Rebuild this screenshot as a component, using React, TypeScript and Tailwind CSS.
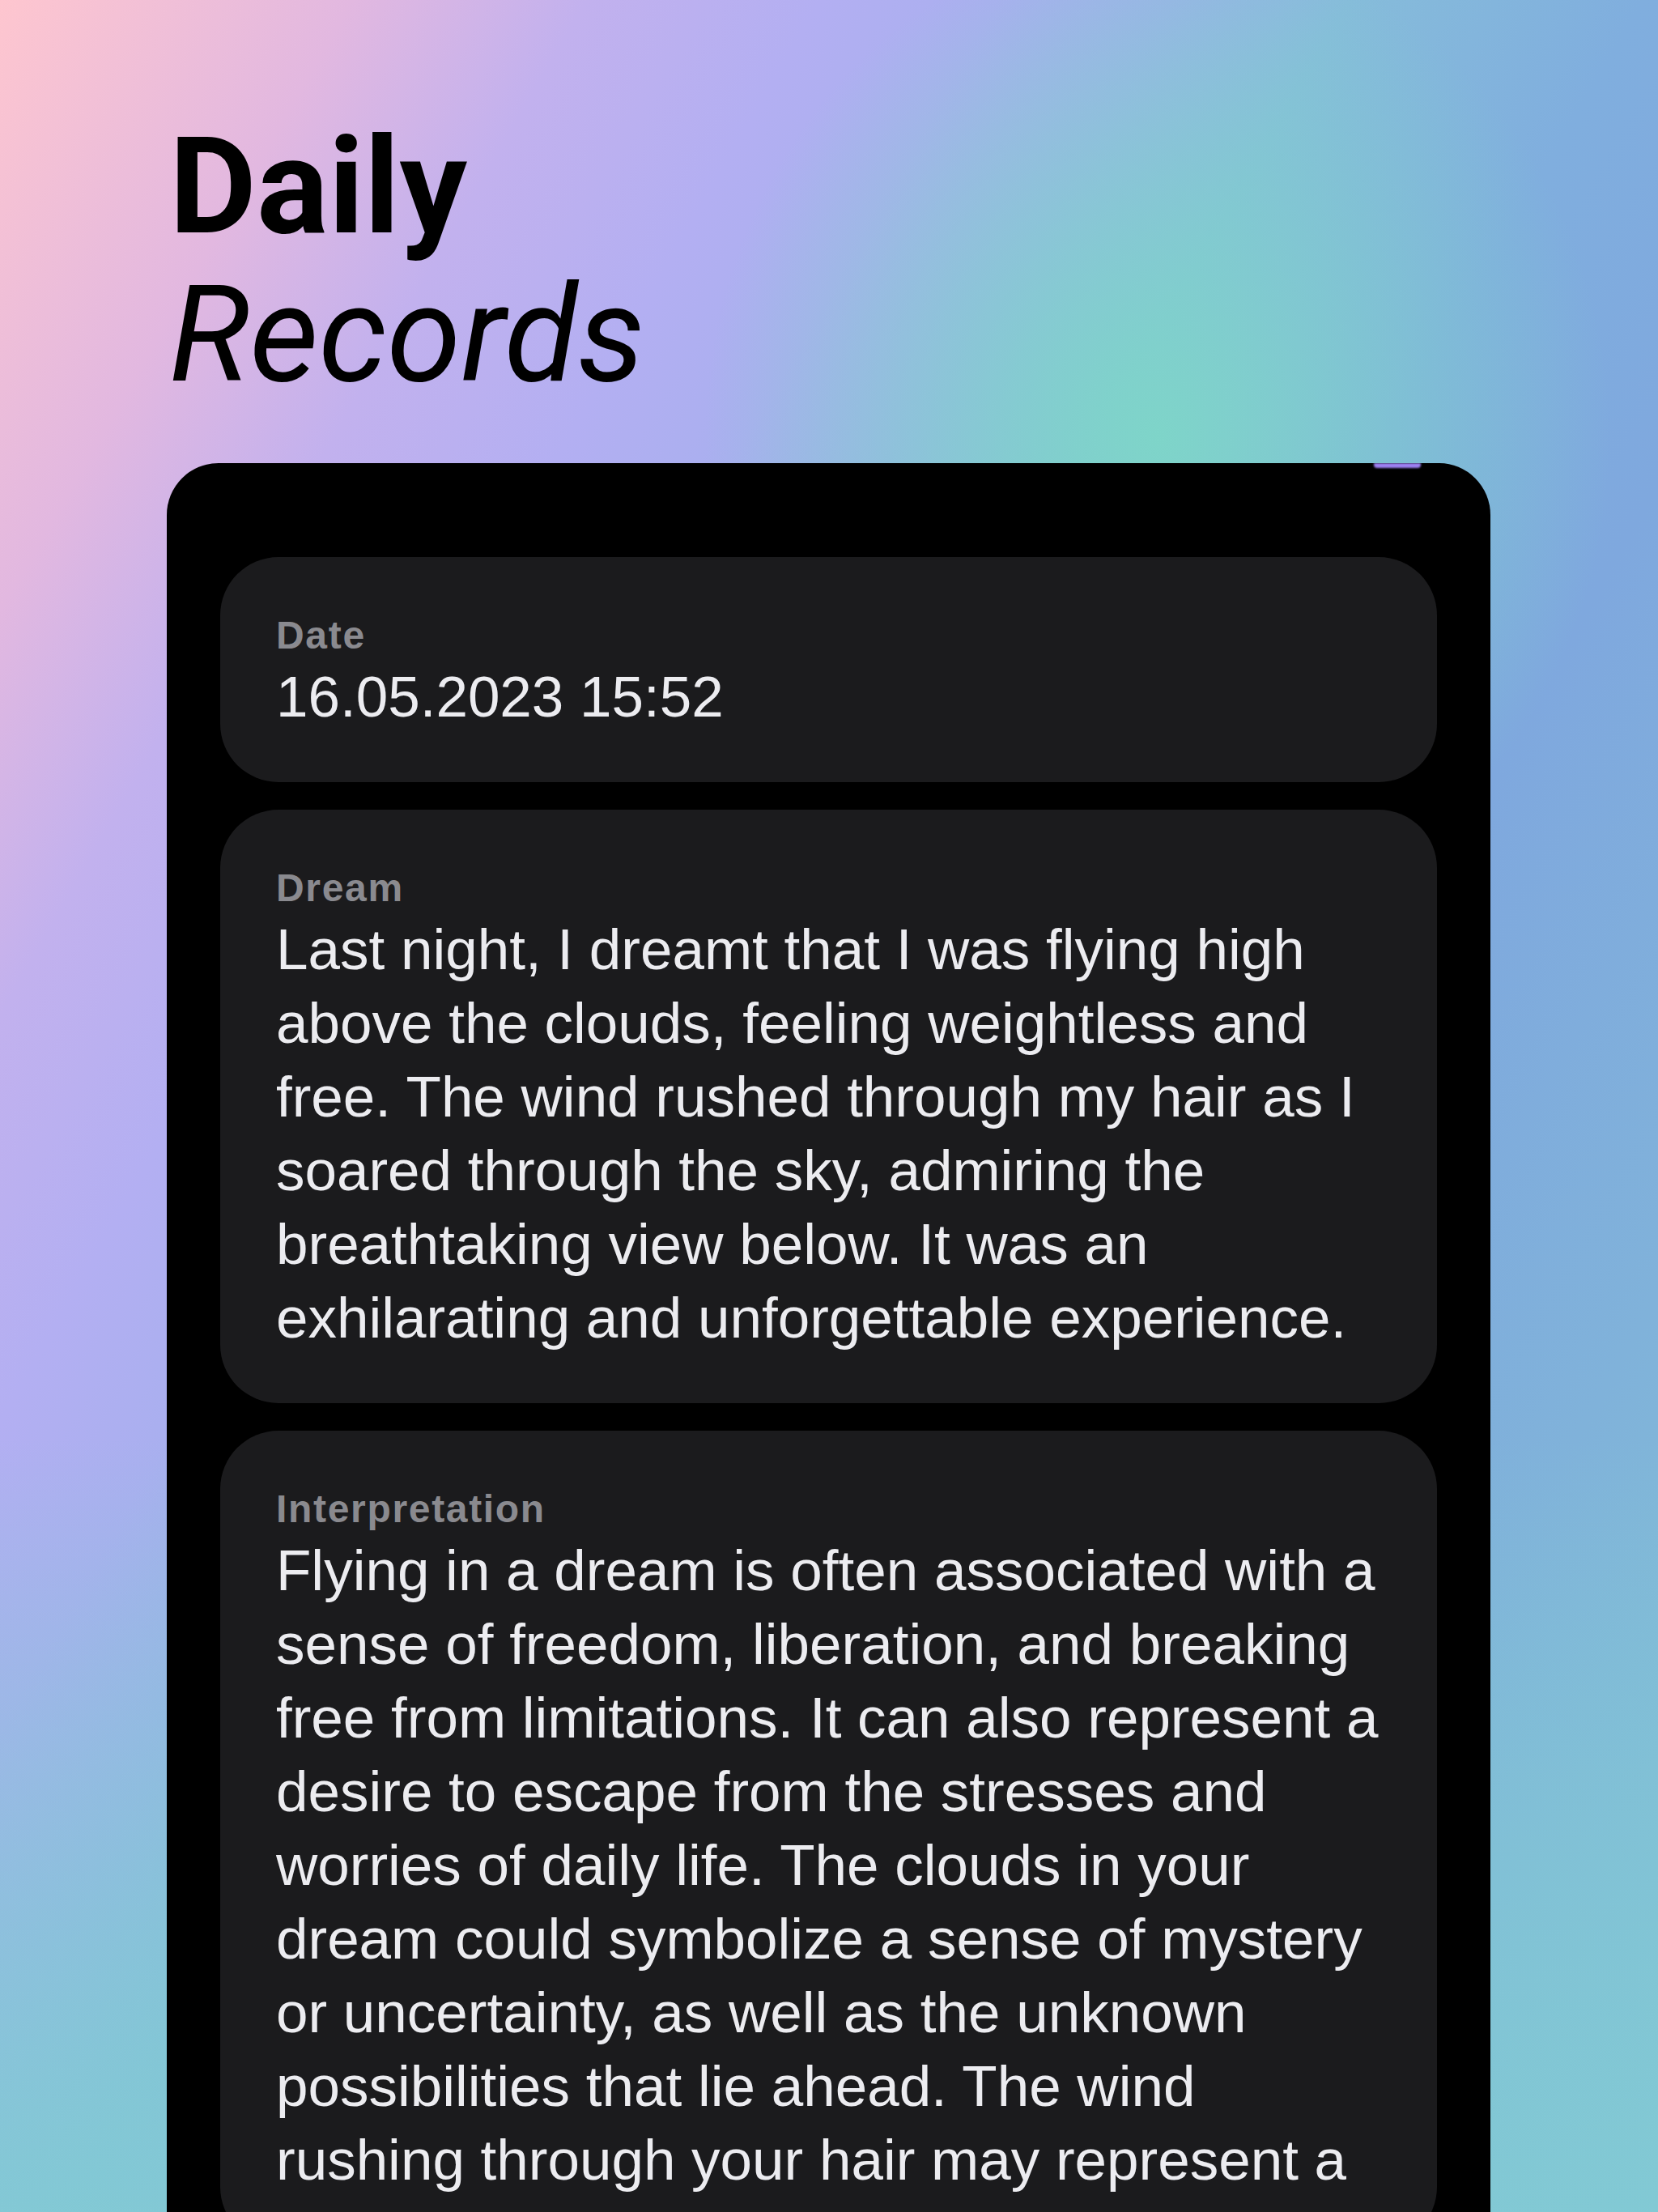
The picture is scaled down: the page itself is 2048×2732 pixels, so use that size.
import React from "react";

const Label = ({ children }: { children: React.ReactNode }) => (
  <div className="text-[48px] leading-[60px] font-bold tracking-[0.035em] text-[#8a8a8f]">{children}</div>
);

const Body = ({ children }: { children: React.ReactNode }) => (
  <div className="text-[71px] leading-[91px] text-[#ececf0]">{children}</div>
);

const Block = ({ label, children }: { label: string; children: React.ReactNode }) => (
  <div className="rounded-[72px] bg-[#1b1b1d] pl-[69px] pr-[63px] pt-[67px] pb-[60px]">
    <Label>{label}</Label>
    <Body>{children}</Body>
  </div>
);

export default function App() {
  return (
    <div
      className="relative w-[2048px] h-[2732px] overflow-hidden bg-[image:radial-gradient(ellipse_560px_620px_at_1430px_540px,rgba(126,214,200,0.95),rgba(126,214,200,0)_100%),linear-gradient(to_top,rgba(130,202,212,0.9)_0%,rgba(130,202,212,0)_35%),linear-gradient(120deg,#fec6cf_0%,#e2b8e0_12%,#c2b1ee_20%,#b3aff2_28%,#a9afef_34%,#98b4e6_40%,#86bcda_46%,#80aede_56%,#7fa8de_66%,#80b2da_82%,#80c2d4_100%)]"
      style={{ fontFamily: '"Liberation Sans", Arial, sans-serif' }}
    >
      <div className="pl-[209px] pt-[139px]" style={{ fontFamily: 'Roboto, "Liberation Sans", sans-serif' }}>
        <div className="text-[166px] leading-[183px] font-bold text-black">Daily</div>
        <div className="text-[166px] leading-[183px] italic font-normal text-black">Records</div>
      </div>

      <div className="relative ml-[206px] mt-[67px] w-[1635px] h-[2160px] overflow-hidden rounded-t-[64px] bg-black pt-[116px] px-[66px]">
        <div className="absolute left-[1491px] top-0 h-[6px] w-[58px] rounded-b-[4px] bg-[#9d80f2] blur-[1px]" />
        <div className="flex flex-col gap-[34px]">
          <Block label="Date">16.05.2023 15:52</Block>
          <Block label="Dream">
            Last night, I dreamt that I was flying high above the clouds, feeling weightless and free. The wind
            rushed through my hair as I soared through the sky, admiring the breathtaking view below. It was an
            exhilarating and unforgettable experience.
          </Block>
          <Block label="Interpretation">
            Flying in a dream is often associated with a sense of freedom, liberation, and breaking free from
            limitations. It can also represent a desire to escape from the stresses and worries of daily life. The
            clouds in your dream could symbolize a sense of mystery or uncertainty, as well as the unknown
            possibilities that lie ahead. The wind rushing through your hair may represent a
          </Block>
        </div>
      </div>
    </div>
  );
}
